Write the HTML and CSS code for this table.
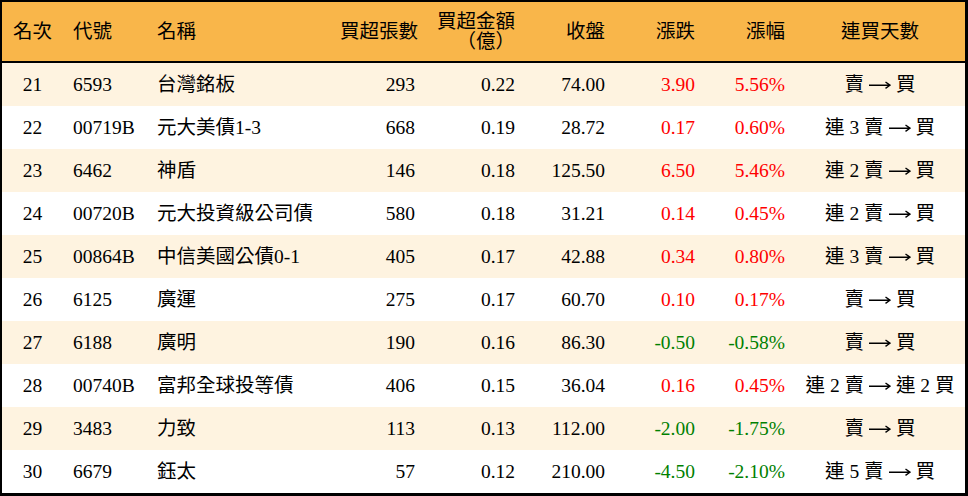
FILE: index.html
```html
<!DOCTYPE html>
<html lang="zh-Hant">
<head>
<meta charset="utf-8">
<link rel="stylesheet" href="styles.css">
</head>
<body>
<div class="frame">
<table class="rank">
<colgroup>
<col class="c-rank"><col class="c-code"><col class="c-name"><col class="c-vol"><col class="c-amt"><col class="c-close"><col class="c-chg"><col class="c-pct"><col class="c-days">
</colgroup>
<thead>
<tr>
<th class="ctr">名次</th>
<th class="lft">代號</th>
<th class="lft">名稱</th>
<th class="rgt">買超張數</th>
<th class="rgt">買超金額<br>（億）</th>
<th class="rgt">收盤</th>
<th class="rgt">漲跌</th>
<th class="rgt">漲幅</th>
<th class="ctr">連買天數</th>
</tr>
</thead>
<tbody>
<tr class="alt"><td class="ctr">21</td><td class="lft">6593</td><td class="lft">台灣銘板</td><td class="rgt">293</td><td class="rgt">0.22</td><td class="rgt">74.00</td><td class="rgt up">3.90</td><td class="rgt up">5.56%</td><td class="ctr">賣 <svg class="arr" viewBox="0 0 22 10"><path d="M0 5.2H21M16.5 2L21 5.2L16.5 8.4"/></svg> 買</td></tr>
<tr><td class="ctr">22</td><td class="lft">00719B</td><td class="lft">元大美債1-3</td><td class="rgt">668</td><td class="rgt">0.19</td><td class="rgt">28.72</td><td class="rgt up">0.17</td><td class="rgt up">0.60%</td><td class="ctr">連 3 賣 <svg class="arr" viewBox="0 0 22 10"><path d="M0 5.2H21M16.5 2L21 5.2L16.5 8.4"/></svg> 買</td></tr>
<tr class="alt"><td class="ctr">23</td><td class="lft">6462</td><td class="lft">神盾</td><td class="rgt">146</td><td class="rgt">0.18</td><td class="rgt">125.50</td><td class="rgt up">6.50</td><td class="rgt up">5.46%</td><td class="ctr">連 2 賣 <svg class="arr" viewBox="0 0 22 10"><path d="M0 5.2H21M16.5 2L21 5.2L16.5 8.4"/></svg> 買</td></tr>
<tr><td class="ctr">24</td><td class="lft">00720B</td><td class="lft">元大投資級公司債</td><td class="rgt">580</td><td class="rgt">0.18</td><td class="rgt">31.21</td><td class="rgt up">0.14</td><td class="rgt up">0.45%</td><td class="ctr">連 2 賣 <svg class="arr" viewBox="0 0 22 10"><path d="M0 5.2H21M16.5 2L21 5.2L16.5 8.4"/></svg> 買</td></tr>
<tr class="alt"><td class="ctr">25</td><td class="lft">00864B</td><td class="lft">中信美國公債0-1</td><td class="rgt">405</td><td class="rgt">0.17</td><td class="rgt">42.88</td><td class="rgt up">0.34</td><td class="rgt up">0.80%</td><td class="ctr">連 3 賣 <svg class="arr" viewBox="0 0 22 10"><path d="M0 5.2H21M16.5 2L21 5.2L16.5 8.4"/></svg> 買</td></tr>
<tr><td class="ctr">26</td><td class="lft">6125</td><td class="lft">廣運</td><td class="rgt">275</td><td class="rgt">0.17</td><td class="rgt">60.70</td><td class="rgt up">0.10</td><td class="rgt up">0.17%</td><td class="ctr">賣 <svg class="arr" viewBox="0 0 22 10"><path d="M0 5.2H21M16.5 2L21 5.2L16.5 8.4"/></svg> 買</td></tr>
<tr class="alt"><td class="ctr">27</td><td class="lft">6188</td><td class="lft">廣明</td><td class="rgt">190</td><td class="rgt">0.16</td><td class="rgt">86.30</td><td class="rgt down">-0.50</td><td class="rgt down">-0.58%</td><td class="ctr">賣 <svg class="arr" viewBox="0 0 22 10"><path d="M0 5.2H21M16.5 2L21 5.2L16.5 8.4"/></svg> 買</td></tr>
<tr><td class="ctr">28</td><td class="lft">00740B</td><td class="lft">富邦全球投等債</td><td class="rgt">406</td><td class="rgt">0.15</td><td class="rgt">36.04</td><td class="rgt up">0.16</td><td class="rgt up">0.45%</td><td class="ctr">連 2 賣 <svg class="arr" viewBox="0 0 22 10"><path d="M0 5.2H21M16.5 2L21 5.2L16.5 8.4"/></svg> 連 2 買</td></tr>
<tr class="alt"><td class="ctr">29</td><td class="lft">3483</td><td class="lft">力致</td><td class="rgt">113</td><td class="rgt">0.13</td><td class="rgt">112.00</td><td class="rgt down">-2.00</td><td class="rgt down">-1.75%</td><td class="ctr">賣 <svg class="arr" viewBox="0 0 22 10"><path d="M0 5.2H21M16.5 2L21 5.2L16.5 8.4"/></svg> 買</td></tr>
<tr><td class="ctr">30</td><td class="lft">6679</td><td class="lft">鈺太</td><td class="rgt">57</td><td class="rgt">0.12</td><td class="rgt">210.00</td><td class="rgt down">-4.50</td><td class="rgt down">-2.10%</td><td class="ctr">連 5 賣 <svg class="arr" viewBox="0 0 22 10"><path d="M0 5.2H21M16.5 2L21 5.2L16.5 8.4"/></svg> 買</td></tr>
</tbody>
</table>
</div>
</body>
</html>
```

FILE: styles.css
```css
html, body {
  margin: 0;
  padding: 0;
  background: #ffffff;
}
.frame {
  width: 968px;
  height: 496px;
  box-sizing: border-box;
  border-style: solid;
  border-color: #000;
  border-width: 2px 3px 3px 2px;
  overflow: hidden;
}
.rank {
  width: 963px;
  border-collapse: separate;
  border-spacing: 0;
  table-layout: fixed;
  font-family: "Liberation Serif", "Noto Sans CJK TC", serif;
  font-size: 19.5px;
  color: #000;
}
.c-rank { width: 61px; }
.c-code { width: 84px; }
.c-name { width: 183px; }
.c-vol { width: 95px; }
.c-amt { width: 100px; }
.c-close { width: 90px; }
.c-chg { width: 90px; }
.c-pct { width: 90px; }
.c-days { width: 170px; }
.rank th {
  height: 59px;
  background: #f9b64a;
  font-weight: normal;
  line-height: 20px;
  padding: 0 10px;
  border-bottom: 2px solid #000;
  white-space: nowrap;
}
.rank td {
  height: 43px;
  padding: 0 10px;
  line-height: 22px;
  white-space: nowrap;
}
.rank tr.alt td {
  background: #fef3e0;
}
.ctr { text-align: center; }
.lft { text-align: left; }
.rgt { text-align: right; }
.rank th.ctr, .rank td.ctr { padding: 0; }
.up { color: #ff0000; }
.down { color: #008000; }
.arr {
  width: 22px;
  height: 10px;
  vertical-align: 0.5px;
  fill: none;
  stroke: #000;
  stroke-width: 1.4;
}
```
